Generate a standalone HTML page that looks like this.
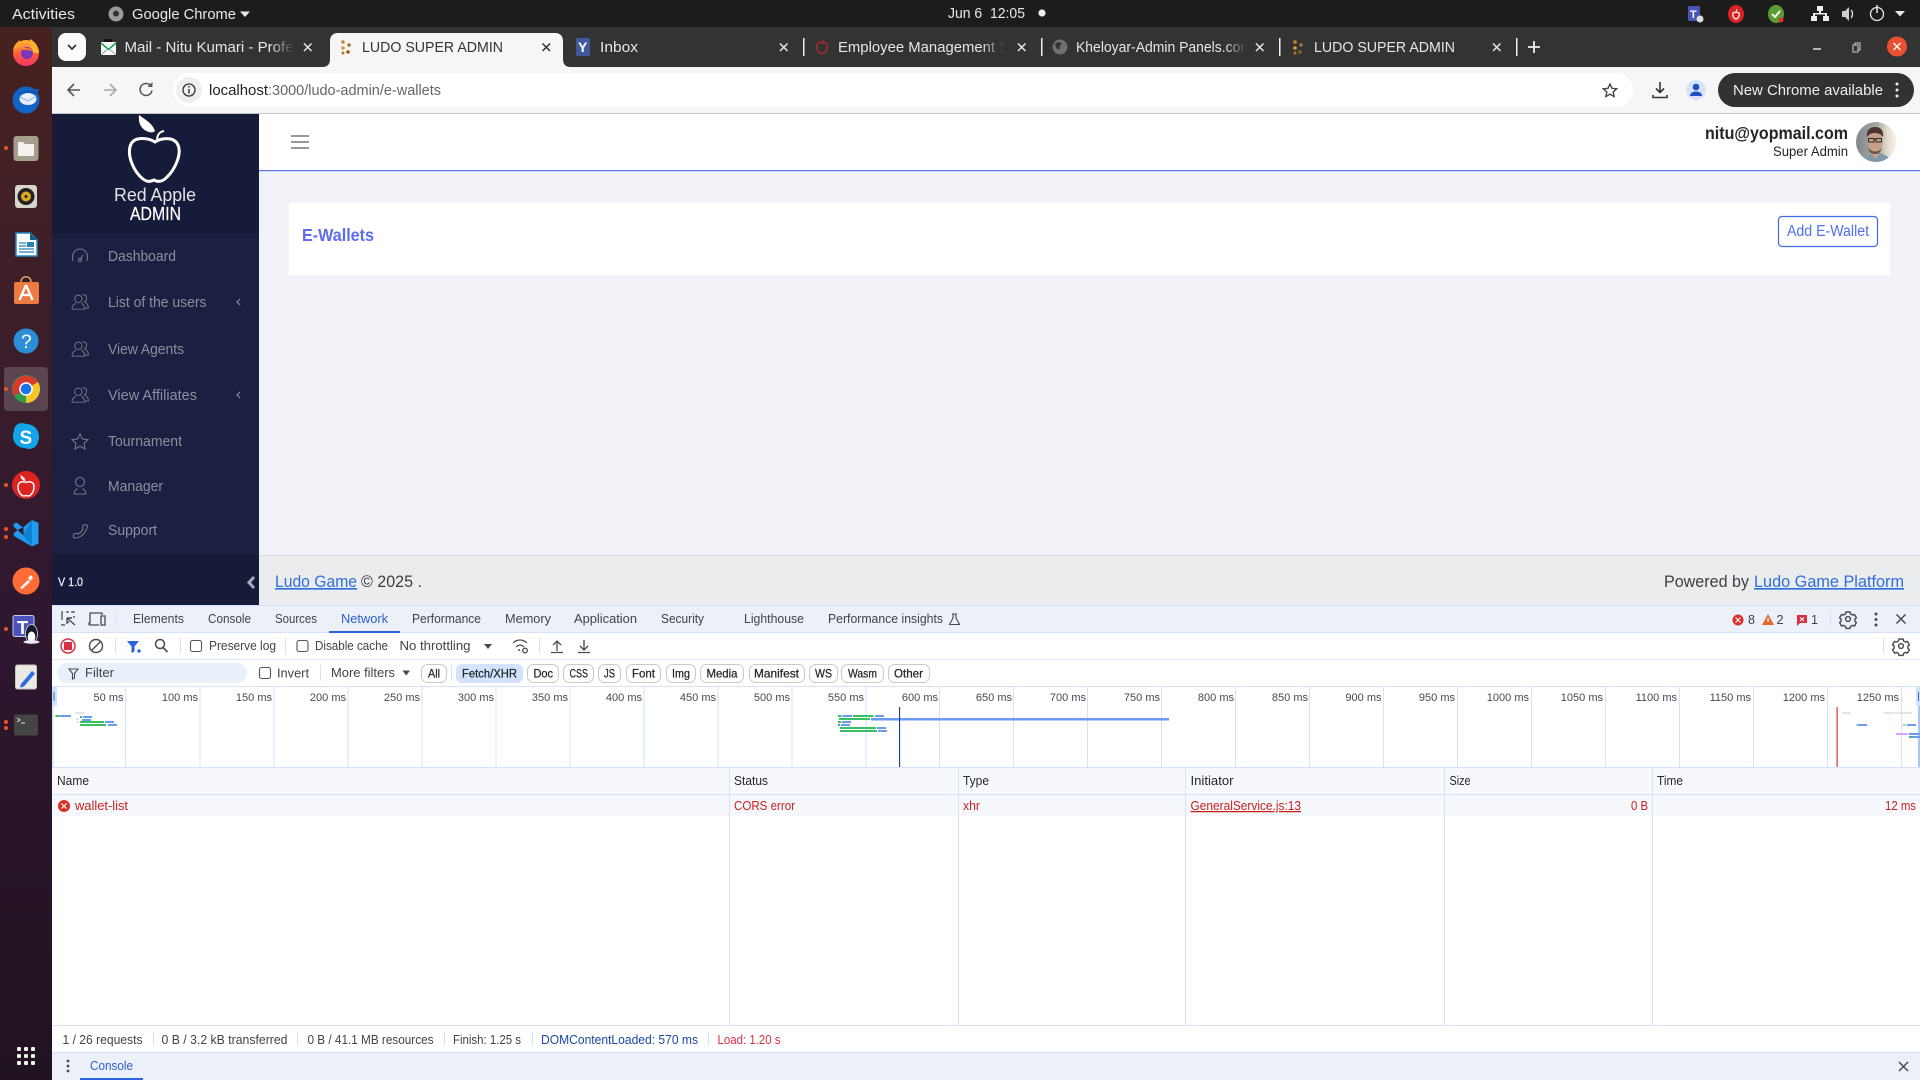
<!DOCTYPE html>
<html lang="en"><head><meta charset="utf-8"><title>LUDO SUPER ADMIN</title>
<style>
html,body{margin:0;padding:0;width:1920px;height:1080px;overflow:hidden;background:#fff}
svg{display:block;position:absolute;left:0;top:0}
text{font-family:"Liberation Sans",sans-serif;white-space:pre}
.top{font-size:14.5px;fill:#e8e8e8}
.tab{font-size:15px;fill:#e6e6e6}
.side{font-size:14.5px;fill:#8b8ea3}
.d{font-size:12.5px;fill:#3f4348}
.h{font-size:12.5px;fill:#24272b}
.r{font-size:12.5px;fill:#c5221f}
.ov{font-size:11px;fill:#45494e;text-anchor:end}
.p{font-size:12px;fill:#24272b;stroke:#24272b;stroke-width:.25px}
.foot{font-size:16.5px;fill:#3c4043}
.lnk{font-size:16.5px;fill:#2f6fdb;text-decoration:underline}
</style></head><body>
<svg width="1920" height="1080" viewBox="0 0 1920 1080" xmlns="http://www.w3.org/2000/svg">
<defs>
<linearGradient id="dock" x1="0" y1="0" x2="0" y2="1"><stop offset="0" stop-color="#47211f"/><stop offset=".3" stop-color="#3b1e2b"/><stop offset=".55" stop-color="#2f1730"/><stop offset="1" stop-color="#20131f"/></linearGradient>
<linearGradient id="fade" x1="0" y1="0" x2="1" y2="0"><stop offset="0" stop-color="#343334" stop-opacity="0"/><stop offset="1" stop-color="#343334"/></linearGradient>
<linearGradient id="ff" x1="0" y1="0" x2="0" y2="1"><stop offset="0" stop-color="#ffb52e"/><stop offset=".55" stop-color="#ff5a3c"/><stop offset="1" stop-color="#f5366c"/></linearGradient>
<linearGradient id="av" x1="0" y1="0" x2="1" y2="0"><stop offset="0" stop-color="#7f878c"/><stop offset=".55" stop-color="#a9aca8"/><stop offset=".8" stop-color="#e6dfcd"/><stop offset="1" stop-color="#f5f2ea"/></linearGradient>
<clipPath id="avc"><circle cx="1876" cy="142" r="20"/></clipPath>
<g id="ppl" fill="none" stroke="#74778e" stroke-width="1.200" transform="scale(.8)"><circle cx="-2" cy="-4" r="4.600"/><path d="M-10 9c0-5 3-6 5-7.500M-10 9h16c0-4-2-6-4.500-7.500M3-9c4-.5 6 2 5 5.500-.5 2-1.500 3-2.500 3.500 2 1 5 2.500 5 7.500h-4"/></g>
<g id="gear" fill="none" stroke="#474b50" stroke-width="1.400"><circle r="2.400"/><path d="M-2-7h4l.6 2 1.800 1 2-.6 2 3.400-1.500 1.400v2l1.500 1.400-2 3.400-2-.6-1.800 1-.6 2h-4l-.6-2-1.800-1-2 .6-2-3.400 1.500-1.400v-2l-1.500-1.400 2-3.400 2 .6 1.800-1z"/></g>
<g id="lud"><circle cx="-3" cy="-5" r="1.800" fill="#c58a2f"/><circle cx="3" cy="-2" r="1.800" fill="#a8762d"/><circle cx="-3" cy="1" r="1.800" fill="#d99a34"/><circle cx="2" cy="5" r="1.800" fill="#8d5f28"/><circle cx="-3" cy="6" r="1.500" fill="#b07a2d"/></g>
</defs>

<!-- system top bar -->
<rect width="1920" height="27" fill="#1c1c1c"/>
<text class="top" x="12" y="19" textLength="63" lengthAdjust="spacingAndGlyphs">Activities</text>
<circle cx="116" cy="14" r="7.500" fill="#9a9a9a"/><circle cx="116" cy="13.500" r="3" fill="#333"/>
<text class="top" x="132" y="19" textLength="104" lengthAdjust="spacingAndGlyphs">Google Chrome</text>
<path d="M240 11.500h10l-5 5.500z" fill="#e8e8e8"/>
<text class="top" x="948" y="18" textLength="77" lengthAdjust="spacingAndGlyphs">Jun 6  12:05</text>
<circle cx="1042" cy="13" r="3.600" fill="#eee"/>
<rect x="1688" y="6" width="12" height="15" rx="1.500" fill="#4a55b8"/><text x="1690" y="18" font-size="11" font-weight="bold" fill="#fff">T</text><circle cx="1700" cy="19" r="3.500" fill="#ddd"/>
<ellipse cx="1736" cy="14" rx="8" ry="9" fill="#d92323"/><path d="M1733 13c2-1 4-1 6 0 1 3-1 6-3 6s-4-3-3-6z" fill="none" stroke="#fff" stroke-width="1.200"/><path d="M1736 12l1-3" stroke="#fff"/>
<ellipse cx="1776" cy="14" rx="8" ry="9" fill="#5a9e33"/><path d="M1772 14l3 3 5-6" stroke="#fff" stroke-width="1.800" fill="none"/><circle cx="1781" cy="20" r="2.500" fill="#e03232"/>
<path d="M1817 6h6v5h-2v2h6v3h2v5h-6v-5h2v-1.500h-10v1.500h2v5h-6v-5h2v-3h6v-2h-2z" fill="#eee"/>
<path d="M1842 11h3l4-4v14l-4-4h-3z" fill="#ccc"/><path d="M1851 10c2 2 2 6 0 8" stroke="#ddd" fill="none" stroke-width="1.300"/>
<circle cx="1877" cy="14" r="6.500" fill="none" stroke="#e8e8e8" stroke-width="1.300"/><path d="M1877 5v8" stroke="#e8e8e8" stroke-width="1.500"/>
<path d="M1895 11h10l-5 5.500z" fill="#e8e8e8"/>

<!-- tab strip -->
<rect x="52" y="27" width="1868" height="40" fill="#343334"/>
<rect x="58" y="33" width="28" height="28" rx="8" fill="#fbfbfb"/>
<path d="M68 45l4 4 4-4" fill="none" stroke="#333" stroke-width="1.700"/>
<!-- mail favicon -->
<rect x="104" y="39" width="8" height="4" rx="1" fill="#111"/>
<rect x="101" y="42" width="15" height="13" fill="#fafafa"/><path d="M101 43l7.500 6.500L116 43" fill="none" stroke="#15a84a" stroke-width="1.600"/><path d="M101 55l5.500-5M116 55l-5.500-5" stroke="#777" stroke-width=".8"/>
<text class="tab" x="124.500" y="52" textLength="216" lengthAdjust="spacingAndGlyphs">Mail - Nitu Kumari - Professional</text>
<rect x="270" y="36" width="24" height="22" fill="url(#fade)"/><rect x="294" y="36" width="50" height="22" fill="#343334"/>
<path d="M304 43.500l7.500 7.500M311.500 43.500l-7.500 7.500" stroke="#e6e6e6" stroke-width="1.500"/>
<path d="M322 67c6 0 8-3 8-8V41c0-5 3-8 8-8h217c5 0 8 3 8 8v18c0 5 2 8 8 8z" fill="#f6f6f6"/>
<use href="#lud" x="346" y="47"/>
<text class="tab" style="fill:#333" x="362" y="52" textLength="141" lengthAdjust="spacingAndGlyphs">LUDO SUPER ADMIN</text>
<path d="M542.500 43.500l7.500 7.500M550 43.500l-7.500 7.500" stroke="#333" stroke-width="1.500"/>
<rect x="576" y="38" width="14" height="18" rx="1.500" fill="#3f5a9a"/><text x="578" y="52" font-size="14" font-weight="bold" fill="#fff">Y</text>
<text class="tab" x="600" y="52" textLength="38" lengthAdjust="spacingAndGlyphs">Inbox</text>
<path d="M780 43.500l7.500 7.500M787.500 43.500l-7.500 7.500" stroke="#e6e6e6" stroke-width="1.500"/>
<rect x="803" y="38" width="1.500" height="18" fill="#eee"/>
<path d="M822 43c-4-2-6 2-5 6 1 3 3 5 5 4 2 1 4-1 5-4 1-4-1-8-5-6z" fill="none" stroke="#b52a2a" stroke-width="1.300"/><path d="M822 43l1-3" stroke="#b52a2a"/>
<text class="tab" x="838" y="52" textLength="186" lengthAdjust="spacingAndGlyphs">Employee Management Sys</text>
<rect x="982" y="36" width="22" height="22" fill="url(#fade)"/><rect x="1004" y="36" width="36" height="22" fill="#343334"/>
<path d="M1018 43.500l7.500 7.500M1025.500 43.500l-7.500 7.500" stroke="#e6e6e6" stroke-width="1.500"/>
<rect x="1041" y="38" width="1.500" height="18" fill="#eee"/>
<circle cx="1060" cy="47" r="7.500" fill="#6f7072"/><path d="M1055 44c3-3 6-2 7 0-2 1-3 3-2 5-2 1-4 0-5-5z" fill="#343334"/>
<text class="tab" x="1076" y="52" textLength="176" lengthAdjust="spacingAndGlyphs">Kheloyar-Admin Panels.com</text>
<rect x="1226" y="36" width="20" height="22" fill="url(#fade)"/><rect x="1246" y="36" width="32" height="22" fill="#343334"/>
<path d="M1256 43.500l7.500 7.500M1263.500 43.500l-7.500 7.500" stroke="#e6e6e6" stroke-width="1.500"/>
<rect x="1279" y="38" width="1.500" height="18" fill="#eee"/>
<use href="#lud" x="1298" y="47"/>
<text class="tab" x="1314" y="52" textLength="141" lengthAdjust="spacingAndGlyphs">LUDO SUPER ADMIN</text>
<path d="M1493 43.500l7.500 7.500M1500.500 43.500l-7.500 7.500" stroke="#e6e6e6" stroke-width="1.500"/>
<rect x="1516" y="38" width="1.500" height="18" fill="#eee"/>
<path d="M1534 41v12M1528 47h12" stroke="#eee" stroke-width="1.800"/>
<path d="M1813 49h8" stroke="#ddd" stroke-width="1.500"/>
<path d="M1853 45h5v7h-5zM1855 45v-2h5v7h-2" fill="none" stroke="#ccc"/>
<circle cx="1897" cy="46.500" r="10" fill="#e8502f"/><path d="M1893.500 43l7 7M1900.500 43l-7 7" stroke="#fff" stroke-width="1.400"/>

<!-- toolbar -->
<path d="M52 113V75c0-5 3-8 8-8h1860v46z" fill="#f6f6f6"/>
<rect x="52" y="113" width="1868" height="1.200" fill="#c6c6c6"/>
<path d="M80 90H68M74 84l-6 6 6 6" fill="none" stroke="#555" stroke-width="1.600"/>
<path d="M104 90h12M110 84l6 6-6 6" fill="none" stroke="#aaa" stroke-width="1.600"/>
<path d="M151 86a6 6 0 1 0 1 4.500" fill="none" stroke="#555" stroke-width="1.500"/><path d="M152.500 82v5h-5z" fill="#555"/>
<rect x="173" y="73" width="1460" height="34" rx="17" fill="#fff"/>
<circle cx="189" cy="90" r="13" fill="#efefef"/>
<circle cx="189" cy="90" r="6" fill="none" stroke="#333" stroke-width="1.300"/><path d="M189 89v4.500M189 86v1.500" stroke="#333" stroke-width="1.400"/>
<text x="209" y="95" font-size="15" fill="#222" textLength="59" lengthAdjust="spacingAndGlyphs">localhost</text>
<text x="268" y="95" font-size="15" fill="#666" textLength="173" lengthAdjust="spacingAndGlyphs">:3000/ludo-admin/e-wallets</text>
<path d="M1610 84l2 4.300 4.700.5-3.500 3.200.9 4.600-4.100-2.400-4.100 2.400.9-4.600-3.500-3.200 4.700-.5z" fill="none" stroke="#444" stroke-width="1.400"/>
<path d="M1660 82v10M1656 88.500l4 4 4-4M1653 95v2.500h14V95" fill="none" stroke="#333" stroke-width="1.600"/>
<ellipse cx="1696" cy="90" rx="10" ry="10" fill="#d5e2f8"/><circle cx="1696" cy="87" r="3.300" fill="#1f4fc0"/><path d="M1690 96c0-6 12-6 12 0z" fill="#1f4fc0"/>
<rect x="1718" y="73" width="196" height="34" rx="17" fill="#333132"/>
<text x="1733" y="95" font-size="15" fill="#eee" textLength="150" lengthAdjust="spacingAndGlyphs">New Chrome available</text>
<circle cx="1897" cy="84" r="1.500" fill="#eee"/><circle cx="1897" cy="90" r="1.500" fill="#eee"/><circle cx="1897" cy="96" r="1.500" fill="#eee"/>

<!-- page main -->
<rect x="259" y="114" width="1661" height="491" fill="#f2f3f8"/>
<rect x="259" y="114" width="1661" height="56" fill="#fff"/>
<rect x="259" y="170" width="1661" height="1.200" fill="#5b73e8"/>
<path d="M291 136h18M291 142h18M291 148h18" stroke="#8a8a8a" stroke-width="1.700"/>
<text x="1705" y="139" font-size="17.500" font-weight="bold" fill="#212529" textLength="143" lengthAdjust="spacingAndGlyphs">nitu@yopmail.com</text>
<text x="1773" y="156" font-size="13.500" fill="#212529" textLength="75" lengthAdjust="spacingAndGlyphs">Super Admin</text>
<g clip-path="url(#avc)"><rect x="1856" y="122" width="40" height="40" fill="url(#av)"/><path d="M1866 162c1-7 5-8 9-9 6 0 14 2 17 9z" fill="#7f99a8"/><path d="M1872 154l4 5 3-5z" fill="#c9a58c"/><ellipse cx="1875" cy="141" rx="7.500" ry="10.500" fill="#c79f86"/><path d="M1867 137c-1-8 4-10 8-10 5 0 9 3 8 10-2-3-5-4-8-4s-6 1-8 4z" fill="#4a3830"/><path d="M1868 147c2 6 12 6 14 0-1 6-4 7-7 7s-6-1-7-7z" fill="#6d5244"/><path d="M1868.500 138.500h5.500v3.500h-5.500zM1876 138.500h5.500v3.500H1876zM1874 139.500h2" fill="none" stroke="#2a2d30" stroke-width="1"/></g>
<rect x="289" y="203" width="1601" height="72" fill="#fff"/>
<text x="302" y="241" font-size="17.500" font-weight="bold" fill="#5d6df0" textLength="72" lengthAdjust="spacingAndGlyphs">E-Wallets</text>
<rect x="1778.500" y="216.500" width="99" height="30" rx="3.500" fill="#fff" stroke="#3f6ce8" stroke-width="1.200"/>
<text x="1787" y="236" font-size="15.500" fill="#4f70f0" textLength="82" lengthAdjust="spacingAndGlyphs">Add E-Wallet</text>
<rect x="259" y="555" width="1661" height="50" fill="#ebecee"/><rect x="259" y="555" width="1661" height="1" fill="#d8dade"/>
<text class="lnk" x="275" y="587" textLength="82" lengthAdjust="spacingAndGlyphs">Ludo Game</text>
<text class="foot" x="361" y="587" textLength="61" lengthAdjust="spacingAndGlyphs">© 2025 .</text>
<text class="foot" x="1664" y="587" textLength="85" lengthAdjust="spacingAndGlyphs">Powered by</text>
<text class="lnk" x="1754" y="587" textLength="150" lengthAdjust="spacingAndGlyphs">Ludo Game Platform</text>

<!-- sidebar -->
<rect x="52" y="114" width="207" height="491" fill="#161b3a"/>
<rect x="52" y="234" width="207" height="321" fill="#1c2040"/>
<path d="M155 131c-3-8-8-10-16-16-1 9 3 15 10 17 3 1 5 0 6-1z" fill="#fff"/>
<path d="M157 141c0-6 2-9 7-10" fill="none" stroke="#fff" stroke-width="2"/>
<path d="M155 142c-6-4-20-6-24 2-5 11 3 28 12 35 4 3 7 3 11 1 3 2 8 2 12-2 9-8 16-24 12-33-4-9-17-7-23-3z" fill="none" stroke="#fff" stroke-width="3"/>
<text x="114" y="201" font-size="18" fill="#fff" fill-opacity=".88" textLength="82" lengthAdjust="spacingAndGlyphs">Red Apple</text>
<text x="130" y="220" font-size="18" fill="#fff" textLength="51" lengthAdjust="spacingAndGlyphs" stroke="#fff" stroke-width=".2">ADMIN</text>
<path d="M73 261c-2-7 2-12 7-12s9 5 7 12M80 260l3-5" fill="none" stroke="#74778e" stroke-width="1.100"/><circle cx="80" cy="260" r="1.700" fill="none" stroke="#74778e"/>
<text class="side" x="108" y="261" textLength="68" lengthAdjust="spacingAndGlyphs">Dashboard</text>
<use href="#ppl" x="80" y="302"/>
<text class="side" x="108" y="307" textLength="98.500" lengthAdjust="spacingAndGlyphs">List of the users</text>
<path d="M240 299l-3 3 3 3" fill="none" stroke="#8b8ea3" stroke-width="1.200"/>
<use href="#ppl" x="80" y="349"/>
<text class="side" x="108" y="354" textLength="76" lengthAdjust="spacingAndGlyphs">View Agents</text>
<use href="#ppl" x="80" y="395"/>
<text class="side" x="108" y="400" textLength="89" lengthAdjust="spacingAndGlyphs">View Affiliates</text>
<path d="M240 392l-3 3 3 3" fill="none" stroke="#8b8ea3" stroke-width="1.200"/>
<path d="M80 434l2.400 5 5.600.7-4 3.900 1 5.400-5-2.700-5 2.700 1-5.400-4-3.900 5.600-.7z" fill="none" stroke="#74778e" stroke-width="1.100"/>
<text class="side" x="108" y="446" textLength="74" lengthAdjust="spacingAndGlyphs">Tournament</text>
<circle cx="80" cy="482" r="4.500" fill="none" stroke="#74778e" stroke-width="1.100"/><path d="M74 494c0-2 1-4 3.500-5.500M86 494c0-2-1-4-3.500-5.500M74 494h12" fill="none" stroke="#74778e" stroke-width="1.100"/>
<text class="side" x="108" y="491" textLength="55" lengthAdjust="spacingAndGlyphs">Manager</text>
<path d="M84 525c3-1 4 1 3 3-2 6-7 10-12 10-2 0-2-3-1-4 2-1 3-1 4 0 2-1 4-3 5-5-1-1-1-3 1-4z" fill="none" stroke="#74778e" stroke-width="1.100"/>
<text class="side" x="108" y="535" textLength="49" lengthAdjust="spacingAndGlyphs">Support</text>
<text x="58" y="586" font-size="12" fill="#eef" stroke="#eef" stroke-width=".25" textLength="25" lengthAdjust="spacingAndGlyphs">V 1.0</text>
<path d="M254 577l-5 5.500 5 5.500" fill="none" stroke="#a9adb8" stroke-width="3"/>

<!-- devtools -->
<rect x="52" y="605" width="1868" height="475" fill="#fff"/>
<rect x="52" y="605" width="1868" height="28" fill="#ebf0f9"/>
<rect x="52" y="605" width="1868" height="1" fill="#d3e3fd"/><rect x="52" y="632" width="1868" height="1" fill="#d3e3fd"/>
<path d="M62 620v-8h1M66 612h3M71 612h3v1M62 624v1h3M74 616v2" fill="none" stroke="#474b50" stroke-width="1.300"/><path d="M67 618l8 7M67 618v5l2-1M67 618h5" fill="none" stroke="#474b50" stroke-width="1.400"/>
<path d="M89 625v-2h1v-10h12v2M89 625h10M101 616h4v9h-4z" fill="none" stroke="#474b50" stroke-width="1.300"/>
<rect x="115" y="611" width="1" height="16" fill="#d3e3fd"/>
<text class="d" x="133" y="623" textLength="51" lengthAdjust="spacingAndGlyphs">Elements</text>
<text class="d" x="208" y="623" textLength="43" lengthAdjust="spacingAndGlyphs">Console</text>
<text class="d" x="275" y="623" textLength="42" lengthAdjust="spacingAndGlyphs">Sources</text>
<text class="d" style="fill:#2d5fd0" x="341" y="623" textLength="47" lengthAdjust="spacingAndGlyphs">Network</text>
<rect x="329" y="631" width="71" height="2" fill="#2d62e0"/>
<text class="d" x="412" y="623" textLength="69" lengthAdjust="spacingAndGlyphs">Performance</text>
<text class="d" x="505" y="623" textLength="46" lengthAdjust="spacingAndGlyphs">Memory</text>
<text class="d" x="574" y="623" textLength="63" lengthAdjust="spacingAndGlyphs">Application</text>
<text class="d" x="661" y="623" textLength="43" lengthAdjust="spacingAndGlyphs">Security</text>
<text class="d" x="744" y="623" textLength="60" lengthAdjust="spacingAndGlyphs">Lighthouse</text>
<text class="d" x="828" y="623" textLength="115" lengthAdjust="spacingAndGlyphs">Performance insights</text>
<path d="M952 614h5M953 614v4l-3.500 6.500h10l-3.500-6.500v-4" fill="none" stroke="#474b50" stroke-width="1.100"/>
<circle cx="1738" cy="620" r="5.500" fill="#d93025"/><path d="M1735.500 617.500l5 5M1740.500 617.500l-5 5" stroke="#fff" stroke-width="1.100"/>
<text class="d" x="1748" y="624" textLength="7" lengthAdjust="spacingAndGlyphs">8</text>
<path d="M1768 614l6 11h-12z" fill="#e8672b"/><rect x="1767.400" y="618" width="1.300" height="4" fill="#fff"/>
<text class="d" x="1776.500" y="624" textLength="7" lengthAdjust="spacingAndGlyphs">2</text>
<path d="M1797 615h10v8h-7l-3 3z" fill="#d93045"/><path d="M1800 617.500l4 3.500M1804 617.500l-4 3.500" stroke="#fff"/>
<text class="d" x="1811" y="624" textLength="7" lengthAdjust="spacingAndGlyphs">1</text>
<rect x="1830" y="611" width="1" height="16" fill="#d3e3fd"/>
<use href="#gear" x="1848" y="619"/>
<circle cx="1876" cy="614" r="1.500" fill="#474b50"/><circle cx="1876" cy="619.500" r="1.500" fill="#474b50"/><circle cx="1876" cy="625" r="1.500" fill="#474b50"/>
<path d="M1896.500 614.500l9 9M1905.500 614.500l-9 9" stroke="#474b50" stroke-width="1.500"/>

<!-- toolbar 1 -->
<rect x="52" y="659" width="1868" height="1" fill="#d3e3fd"/>
<circle cx="68" cy="646" r="7" fill="#fff" stroke="#d93045" stroke-width="1.500"/><rect x="64" y="642" width="8" height="8" fill="#d93045"/>
<circle cx="96" cy="646" r="6.500" fill="none" stroke="#474b50" stroke-width="1.400"/><path d="M91.500 650.500l9-9" stroke="#474b50" stroke-width="1.400"/>
<rect x="115" y="638" width="1" height="16" fill="#d3e3fd"/>
<path d="M127 641h12l-4.500 5.500v5l-3 1.500v-6.500z" fill="#2d62e0"/><circle cx="139" cy="651" r="1.700" fill="#2d62e0"/>
<circle cx="160" cy="644" r="4.500" fill="none" stroke="#474b50" stroke-width="1.500"/><path d="M163 647.500l4.500 4.500" stroke="#474b50" stroke-width="1.700"/>
<rect x="180" y="638" width="1" height="16" fill="#d3e3fd"/>
<rect x="190.500" y="640.500" width="11" height="11" rx="2" fill="#fff" stroke="#555" stroke-width="1.100"/>
<text class="d" x="209" y="650" textLength="67" lengthAdjust="spacingAndGlyphs">Preserve log</text>
<rect x="285" y="638" width="1" height="16" fill="#d3e3fd"/>
<rect x="297" y="640.500" width="11" height="11" rx="2" fill="#fff" stroke="#555" stroke-width="1.100"/>
<text class="d" x="315" y="650" textLength="73" lengthAdjust="spacingAndGlyphs">Disable cache</text>
<text class="d" x="399.500" y="650" textLength="71" lengthAdjust="spacingAndGlyphs">No throttling</text>
<path d="M484 644h8l-4 5z" fill="#474b50"/>
<path d="M513 643c4-4 10-4 14 0M516 647c2.500-2.500 6-2.500 8 0" fill="none" stroke="#474b50" stroke-width="1.200"/><circle cx="519" cy="650" r="1" fill="#474b50"/><circle cx="525" cy="650.500" r="2.300" fill="none" stroke="#474b50" stroke-width="1.300"/>
<rect x="539" y="638" width="1" height="16" fill="#d3e3fd"/>
<path d="M557 651v-10M553 645l4-4 4 4M551 652.500h12" fill="none" stroke="#474b50" stroke-width="1.300"/>
<path d="M584 640v10M580 646l4 4 4-4M578 652.500h12" fill="none" stroke="#474b50" stroke-width="1.300"/>
<rect x="1883" y="638" width="1" height="16" fill="#d3e3fd"/>
<use href="#gear" x="1901" y="646"/>

<!-- toolbar 2 -->
<rect x="52" y="686" width="1868" height="1" fill="#d3e3fd"/>
<rect x="57" y="663" width="190" height="20" rx="10" fill="#eaf0f9"/>
<path d="M69 669h9l-3.500 4.500v4.500l-2 1v-5.500z" fill="none" stroke="#474b50" stroke-width="1.100"/>
<text class="d" x="85" y="677" textLength="29" lengthAdjust="spacingAndGlyphs">Filter</text>
<rect x="259.500" y="667.500" width="11" height="11" rx="2" fill="#fff" stroke="#555" stroke-width="1.100"/>
<text class="d" x="277" y="677.500" textLength="32" lengthAdjust="spacingAndGlyphs">Invert</text>
<rect x="320" y="665" width="1" height="16" fill="#d3e3fd"/>
<text class="d" x="331" y="677" textLength="64" lengthAdjust="spacingAndGlyphs">More filters</text>
<path d="M402.500 670.500h7.500l-3.750 5z" fill="#474b50"/>
<g fill="#fff" stroke="#c7c9cc"><rect x="421.500" y="664.500" width="25" height="18" rx="6"/><rect x="527.500" y="664.500" width="31" height="18" rx="6"/><rect x="563.500" y="664.500" width="30" height="18" rx="6"/><rect x="598.500" y="664.500" width="22" height="18" rx="6"/><rect x="626.500" y="664.500" width="34" height="18" rx="6"/><rect x="666.500" y="664.500" width="29" height="18" rx="6"/><rect x="700.500" y="664.500" width="43" height="18" rx="6"/><rect x="749.500" y="664.500" width="55" height="18" rx="6"/><rect x="809.500" y="664.500" width="28" height="18" rx="6"/><rect x="841.500" y="664.500" width="42" height="18" rx="6"/><rect x="888.500" y="664.500" width="41" height="18" rx="6"/></g>
<rect x="451" y="665" width="1" height="16" fill="#d3e3fd"/>
<rect x="456" y="664" width="67" height="19" rx="6" fill="#d3e3fd"/>
<text class="p" x="428" y="677.500" textLength="12" lengthAdjust="spacingAndGlyphs">All</text>
<text class="p" x="462" y="677.500" textLength="55" lengthAdjust="spacingAndGlyphs">Fetch/XHR</text>
<text class="p" x="533.500" y="677.500" textLength="19.500" lengthAdjust="spacingAndGlyphs">Doc</text>
<text class="p" x="569.500" y="677.500" textLength="18.500" lengthAdjust="spacingAndGlyphs">CSS</text>
<text class="p" x="604" y="677.500" textLength="11" lengthAdjust="spacingAndGlyphs">JS</text>
<text class="p" x="632" y="677.500" textLength="23" lengthAdjust="spacingAndGlyphs">Font</text>
<text class="p" x="672" y="677.500" textLength="18" lengthAdjust="spacingAndGlyphs">Img</text>
<text class="p" x="706.500" y="677.500" textLength="31" lengthAdjust="spacingAndGlyphs">Media</text>
<text class="p" x="754" y="677.500" textLength="45" lengthAdjust="spacingAndGlyphs">Manifest</text>
<text class="p" x="815" y="677.500" textLength="17" lengthAdjust="spacingAndGlyphs">WS</text>
<text class="p" x="848" y="677.500" textLength="29" lengthAdjust="spacingAndGlyphs">Wasm</text>
<text class="p" x="894" y="677.500" textLength="29" lengthAdjust="spacingAndGlyphs">Other</text>

<!-- overview -->
<g fill="#d3e3fd">
<rect x="125" y="687" width="1" height="80"/><rect x="199.500" y="687" width="1" height="80"/><rect x="273.500" y="687" width="1" height="80"/><rect x="347.500" y="687" width="1" height="80"/><rect x="421.500" y="687" width="1" height="80"/><rect x="495.500" y="687" width="1" height="80"/><rect x="569.500" y="687" width="1" height="80"/><rect x="643.500" y="687" width="1" height="80"/><rect x="717.500" y="687" width="1" height="80"/><rect x="791.500" y="687" width="1" height="80"/><rect x="865.500" y="687" width="1" height="80"/><rect x="939" y="687" width="1" height="80"/><rect x="1013" y="687" width="1" height="80"/><rect x="1087" y="687" width="1" height="80"/><rect x="1161" y="687" width="1" height="80"/><rect x="1235" y="687" width="1" height="80"/><rect x="1309" y="687" width="1" height="80"/><rect x="1383" y="687" width="1" height="80"/><rect x="1457" y="687" width="1" height="80"/><rect x="1531" y="687" width="1" height="80"/><rect x="1605" y="687" width="1" height="80"/><rect x="1679" y="687" width="1" height="80"/><rect x="1753" y="687" width="1" height="80"/><rect x="1827" y="687" width="1" height="80"/><rect x="1901" y="687" width="1" height="80"/>
<rect x="52" y="687" width="1.500" height="80"/><rect x="1918" y="705" width="2" height="62" fill="#a9c6f5"/>
</g>
<rect x="52" y="687" width="5" height="19" rx="1.500" fill="#d3e3fd"/><rect x="53.500" y="692" width="1" height="9" fill="#3367d6"/>
<rect x="1916" y="687" width="4" height="19" rx="1.500" fill="#d3e3fd"/><rect x="1918" y="692" width="1" height="9" fill="#3367d6"/>
<g>
<text class="ov" x="123.500" y="701">50 ms</text><text class="ov" x="198" y="701">100 ms</text><text class="ov" x="272" y="701">150 ms</text><text class="ov" x="346" y="701">200 ms</text><text class="ov" x="420" y="701">250 ms</text><text class="ov" x="494" y="701">300 ms</text><text class="ov" x="568" y="701">350 ms</text><text class="ov" x="642" y="701">400 ms</text><text class="ov" x="716" y="701">450 ms</text><text class="ov" x="790" y="701">500 ms</text><text class="ov" x="864" y="701">550 ms</text><text class="ov" x="938" y="701">600 ms</text><text class="ov" x="1012" y="701">650 ms</text><text class="ov" x="1086" y="701">700 ms</text><text class="ov" x="1160" y="701">750 ms</text><text class="ov" x="1234" y="701">800 ms</text><text class="ov" x="1308" y="701">850 ms</text><text class="ov" x="1381.500" y="701">900 ms</text><text class="ov" x="1455" y="701">950 ms</text><text class="ov" x="1529" y="701">1000 ms</text><text class="ov" x="1603" y="701">1050 ms</text><text class="ov" x="1677" y="701">1100 ms</text><text class="ov" x="1751" y="701">1150 ms</text><text class="ov" x="1825" y="701">1200 ms</text><text class="ov" x="1899" y="701">1250 ms</text>
</g>
<!-- waterfall bars -->
<g fill="#e4e4e4"><rect x="75" y="712" width="9" height="2"/><rect x="76" y="718" width="3" height="2"/><rect x="76" y="721" width="3" height="2"/><rect x="1842" y="712" width="9" height="2"/><rect x="1884" y="712" width="9" height="2"/><rect x="1894" y="712" width="18" height="2"/></g>
<g fill="#34c063"><rect x="55.500" y="715" width="4" height="2"/><rect x="80" y="716" width="2" height="2"/><rect x="80" y="721" width="24" height="2"/><rect x="80" y="724" width="26" height="2"/><rect x="838" y="715" width="3.500" height="2"/><rect x="853" y="715" width="20.500" height="2"/><rect x="839" y="718" width="31" height="2"/><rect x="838" y="721" width="3" height="2"/><rect x="838" y="724" width="2" height="2"/><rect x="840" y="727" width="36" height="2"/><rect x="840" y="730" width="37" height="2"/><rect x="1856" y="724" width="2.500" height="2" fill-opacity=".5"/><rect x="1903" y="724" width="3" height="2" fill-opacity=".5"/><rect x="1909" y="736" width="3" height="2"/></g>
<g fill="#6a9bf0"><rect x="60" y="715" width="11" height="2"/><rect x="83" y="716" width="9" height="2"/><rect x="82" y="719" width="9" height="2"/><rect x="105" y="721" width="9" height="2"/><rect x="108" y="724" width="9" height="2"/><rect x="842.500" y="715" width="9.500" height="2"/><rect x="875" y="715" width="9" height="2"/><rect x="871" y="718" width="298" height="2.500"/><rect x="842" y="721" width="9" height="2"/><rect x="841" y="724" width="9" height="2"/><rect x="877" y="727" width="9" height="2"/><rect x="878" y="730" width="9" height="2"/><rect x="1858" y="724" width="9" height="2"/><rect x="1907" y="724" width="9" height="2"/><rect x="1909" y="733" width="11" height="2"/><rect x="1912" y="736" width="8" height="2"/></g>
<rect x="1896" y="733" width="12" height="2" fill="#dba4f2"/>
<rect x="899" y="707" width="1.100" height="60" fill="#1a3a9e"/>
<rect x="1836.500" y="707" width="1.200" height="60" fill="#d93040"/>

<!-- table -->
<rect x="52" y="767" width="1868" height="1" fill="#d3e3fd"/>
<rect x="52" y="768" width="1868" height="26" fill="#f7f8fc"/>
<rect x="52" y="794" width="1868" height="1" fill="#d3e3fd"/>
<rect x="52" y="795" width="1868" height="21" fill="#f7f8fc"/>
<g fill="#d3e3fd"><rect x="729" y="768" width="1" height="257"/><rect x="958" y="768" width="1" height="257"/><rect x="1185" y="768" width="1" height="257"/><rect x="1444" y="768" width="1" height="257"/><rect x="1652" y="768" width="1" height="257"/></g>
<text class="h" x="57" y="785" textLength="32" lengthAdjust="spacingAndGlyphs">Name</text>
<text class="h" x="734" y="785" textLength="34" lengthAdjust="spacingAndGlyphs">Status</text>
<text class="h" x="963" y="785" textLength="26" lengthAdjust="spacingAndGlyphs">Type</text>
<text class="h" x="1190.500" y="785" textLength="43" lengthAdjust="spacingAndGlyphs">Initiator</text>
<text class="h" x="1449.500" y="785" textLength="21" lengthAdjust="spacingAndGlyphs">Size</text>
<text class="h" x="1657" y="785" textLength="26" lengthAdjust="spacingAndGlyphs">Time</text>
<circle cx="64" cy="806" r="6" fill="#d93025"/><path d="M61.500 803.500l5 5M66.500 803.500l-5 5" stroke="#fff" stroke-width="1.200"/>
<text class="r" x="75" y="810" textLength="53" lengthAdjust="spacingAndGlyphs">wallet-list</text>
<text class="r" x="734" y="810" textLength="61" lengthAdjust="spacingAndGlyphs">CORS error</text>
<text class="r" x="963" y="810" textLength="17" lengthAdjust="spacingAndGlyphs">xhr</text>
<text class="r" style="text-decoration:underline" x="1190.500" y="810" textLength="110.500" lengthAdjust="spacingAndGlyphs">GeneralService.js:13</text>
<text class="r" x="1631" y="810" textLength="17" lengthAdjust="spacingAndGlyphs">0 B</text>
<text class="r" x="1885" y="810" textLength="31" lengthAdjust="spacingAndGlyphs">12 ms</text>

<!-- status bar -->
<rect x="52" y="1025" width="1868" height="1" fill="#d3e3fd"/>
<g fill="#d3e3fd"><rect x="153" y="1032" width="1" height="14"/><rect x="297" y="1032" width="1" height="14"/><rect x="444" y="1032" width="1" height="14"/><rect x="532" y="1032" width="1" height="14"/><rect x="708" y="1032" width="1" height="14"/></g>
<text class="d" x="62.500" y="1044" textLength="80" lengthAdjust="spacingAndGlyphs">1 / 26 requests</text>
<text class="d" x="161.500" y="1044" textLength="126" lengthAdjust="spacingAndGlyphs">0 B / 3.2 kB transferred</text>
<text class="d" x="307.500" y="1044" textLength="126" lengthAdjust="spacingAndGlyphs">0 B / 41.1 MB resources</text>
<text class="d" x="453" y="1044" textLength="68" lengthAdjust="spacingAndGlyphs">Finish: 1.25 s</text>
<text class="d" style="fill:#1a47a8" x="541" y="1044" textLength="157" lengthAdjust="spacingAndGlyphs">DOMContentLoaded: 570 ms</text>
<text class="d" style="fill:#d93040" x="717.500" y="1044" textLength="63" lengthAdjust="spacingAndGlyphs">Load: 1.20 s</text>
<rect x="52" y="1052" width="1868" height="28" fill="#ebf0f9"/><rect x="52" y="1052" width="1868" height="1" fill="#d3e3fd"/>
<circle cx="68" cy="1061" r="1.400" fill="#474b50"/><circle cx="68" cy="1066" r="1.400" fill="#474b50"/><circle cx="68" cy="1071" r="1.400" fill="#474b50"/>
<text class="d" style="fill:#2d5fd0" x="90" y="1070" textLength="43" lengthAdjust="spacingAndGlyphs">Console</text>
<rect x="80" y="1078" width="63" height="2" fill="#2d62e0"/>
<path d="M1899 1062l9 9M1908 1062l-9 9" stroke="#474b50" stroke-width="1.500"/>

<!-- dock -->
<rect x="0" y="27" width="52" height="1053" fill="url(#dock)"/>
<rect x="4" y="367" width="44" height="44" rx="4" fill="#fff" fill-opacity=".18"/>
<g fill="#e95420"><circle cx="6" cy="148" r="2"/><circle cx="6" cy="389" r="2"/><circle cx="6" cy="485" r="2"/><circle cx="6" cy="529" r="2"/><circle cx="6" cy="537" r="2"/><circle cx="6" cy="629" r="2"/><circle cx="6" cy="722" r="2"/><circle cx="6" cy="728" r="2"/></g>
<!-- firefox -->
<circle cx="26" cy="53" r="13" fill="url(#ff)"/><path d="M30 39c6 3 9 9 9 14h-8c0-4-1-9-1-14z" fill="#ffb52e"/><path d="M13 50c1-5 4-8 7-10-1 3 0 5 2 6z" fill="#ffa02e"/><circle cx="27" cy="53" r="6" fill="#7a35bd"/><path d="M20 50c3-3 10-3 13 1l-7-1z" fill="#ff7a2e"/>
<!-- thunderbird -->
<circle cx="26" cy="100" r="13.500" fill="#1265c8"/><path d="M14 92c6 2 18-4 25-3-1 4-2 6-4 8z" fill="#0d59b8"/><ellipse cx="28" cy="99" rx="8.500" ry="6" fill="#e8f0fb"/><path d="M20 97l8 4 8-5" fill="none" stroke="#8cb6ea"/>
<!-- files -->
<rect x="13.500" y="136" width="25" height="25" rx="3" fill="#a59d8d"/><path d="M18 142h5l2 2h9v12H18z" fill="#f4f2ee"/>
<!-- rhythmbox -->
<rect x="15" y="185" width="22" height="23" rx="3" fill="#d9d5cc"/><circle cx="26" cy="196.500" r="8.500" fill="#222"/><circle cx="26" cy="196.500" r="5" fill="#d9a81d"/><circle cx="26" cy="196.500" r="1.500" fill="#222"/>
<!-- writer -->
<path d="M16 233h14l7 7v16H16z" fill="#fff" stroke="#1f8fc6" stroke-width="1.500"/><path d="M30 233l7 7h-7z" fill="#155e86"/><path d="M19 243h7M19 246h7M19 249h15M19 252h15" stroke="#2a7fb5" stroke-width="1.200"/><rect x="27" y="242" width="7" height="5" fill="#2a7fb5"/>
<!-- software -->
<rect x="14" y="282" width="25" height="22" rx="2" fill="#ec7a42"/><path d="M21 282c0-7 10-7 10 0" fill="none" stroke="#e8a070" stroke-width="1.500"/><path d="M26 285l-6.500 15M26 285l6.500 15M22 295h8" stroke="#fff" stroke-width="2.300" fill="none"/>
<!-- help -->
<circle cx="26" cy="341" r="12.500" fill="#2d8ed8"/><text x="21" y="348" font-size="19" fill="#fff">?</text>
<!-- chrome -->
<circle cx="26" cy="389" r="14" fill="#2e9e4a"/>
<path d="M26 389l12.100-7A14 14 0 0 0 13.900 396z" fill="#d93a2e"/>
<path d="M26 389l12.100-7A14 14 0 0 1 26 403z" fill="#f6c52c"/>
<circle cx="26" cy="389" r="6.800" fill="#fff"/><circle cx="26" cy="389" r="5.300" fill="#1a73e8"/>
<!-- skype -->
<path d="M26 424c8 0 13 6 13 13 0 2 0 3-1 4 0 3-3 8-9 8-2 0-3-.5-4-1-8 0-12-6-12-12 0-2 0-3 1-4-.5-5 3-9 8-9 1 0 3 .5 4 1z" fill="#12a5e8"/>
<text x="19.500" y="444" font-size="19" font-weight="bold" fill="#fff">S</text>
<!-- apple -->
<circle cx="26" cy="485" r="14" fill="#dd2422"/><path d="M26 482.500c-3-1.500-8-1-8 4 0 5 3 9.500 6 9.500 1 0 1.500-.5 2-.5s1 .5 2 .5c3 0 6-4.500 6-9.500 0-5-5-5.500-8-4z" fill="none" stroke="#fff" stroke-width="1.500"/><path d="M25.500 481c-.5-3-2.500-4.500-5-6 0 3.500 2 6 5 6z" fill="#fff"/>
<!-- vscode -->
<path d="M32 520l6.500 3v20.500L32 546.500 14 536l-.5-2.500 4-3.500 6 5.500V527l-6 3-4-3.500v-2.500l3-1.500 6.500 5z" fill="#1f9cf0"/><path d="M32 520v26.500l-9-11.500z" fill="#0f7fcf"/>
<!-- postman -->
<circle cx="26" cy="581" r="13.500" fill="#ff6c37"/><path d="M20 588l8-8 2 2-8 7zM28 578l3-3 2 3-3 3z" fill="#fff"/>
<!-- teams -->
<rect x="13" y="615.500" width="21" height="21" rx="2" fill="#4a53bb" stroke="#c9ccec"/><text x="17" y="634" font-size="18" font-weight="bold" fill="#fff">T</text>
<ellipse cx="31.500" cy="634" rx="6" ry="9.500" fill="#16182e" stroke="#ddd" stroke-width=".8"/><ellipse cx="31.500" cy="637" rx="3.800" ry="5.500" fill="#fff"/><ellipse cx="31.500" cy="642" rx="8" ry="1.800" fill="#e8e8e8"/>
<!-- editor -->
<rect x="15.500" y="665" width="21" height="24" rx="2" fill="#ebe9e4" stroke="#c7c5bf"/><path d="M21 684l11-13 3 2.500-11 13-4 1z" fill="#2c6de0"/>
<!-- terminal -->
<rect x="14" y="714.500" width="24" height="21" rx="2" fill="#454545"/><path d="M17 718l3 2-3 2M21 723h4" fill="none" stroke="#ddd"/>
<!-- grid -->
<g fill="#eee"><rect x="17" y="1047" width="4" height="4" rx="1"/><rect x="24" y="1047" width="4" height="4" rx="1"/><rect x="31" y="1047" width="4" height="4" rx="1"/><rect x="17" y="1054" width="4" height="4" rx="1"/><rect x="24" y="1054" width="4" height="4" rx="1"/><rect x="31" y="1054" width="4" height="4" rx="1"/><rect x="17" y="1061" width="4" height="4" rx="1"/><rect x="24" y="1061" width="4" height="4" rx="1"/><rect x="31" y="1061" width="4" height="4" rx="1"/></g>
</svg>
</body></html>
